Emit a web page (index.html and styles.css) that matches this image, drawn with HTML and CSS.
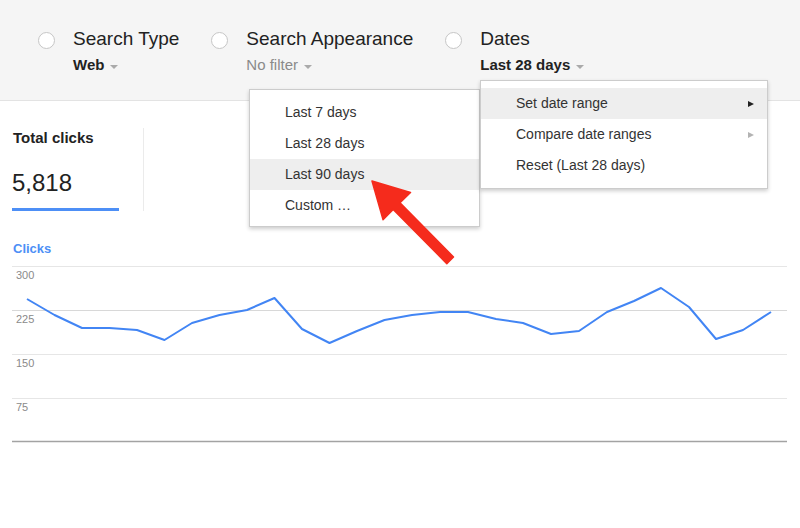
FILE: index.html
```html
<!DOCTYPE html>
<html lang="en">
<head>
<meta charset="utf-8">
<title>Search Analytics</title>
<link rel="stylesheet" href="styles.css">
</head>
<body>
<div class="page">
  <header class="filters">
    <div class="filter">
      <span class="radio"></span>
      <div class="filter-body">
        <div class="filter-title">Search Type</div>
        <div class="filter-value strong">Web<span class="caret"></span></div>
      </div>
    </div>
    <div class="filter">
      <span class="radio"></span>
      <div class="filter-body">
        <div class="filter-title">Search Appearance</div>
        <div class="filter-value muted">No filter<span class="caret"></span></div>
      </div>
    </div>
    <div class="filter">
      <span class="radio"></span>
      <div class="filter-body">
        <div class="filter-title">Dates</div>
        <div class="filter-value strong">Last 28 days<span class="caret"></span></div>
      </div>
    </div>
  </header>

  <section class="metrics">
    <div class="metric">
      <div class="metric-label">Total clicks</div>
      <div class="metric-value">5,818</div>
      <div class="metric-bar"></div>
    </div>
    <div class="metric-divider"></div>
  </section>

  <div class="series-label">Clicks</div>

  <svg class="chart" width="776" height="186" viewBox="12 262 776 186">
    <g class="grid">
      <line x1="12" y1="267.5" x2="787" y2="267.5"/>
      <line x1="12" y1="311.5" x2="787" y2="311.5" class="mid"/>
      <line x1="12" y1="355.5" x2="787" y2="355.5"/>
      <line x1="12" y1="399.5" x2="787" y2="399.5"/>
    </g>
    <line class="axis" x1="12" y1="442.5" x2="787" y2="442.5"/>
    <g class="ylabels">
      <text x="16" y="280">300</text>
      <text x="16" y="324">225</text>
      <text x="16" y="368">150</text>
      <text x="16" y="412">75</text>
    </g>
    <polyline class="series" points="27,300 54.5,316 82,329 109.5,329 137,331 164.5,341 192,324 219.5,316 247,311 274.5,299 302,330 329.5,344 357,332 384.5,321 412,316 440,313 468,313 496,320 523,324 551,335 579,332 607,313 634,302 661,289 689,308 716,340 743,331 771,313"/>
  </svg>

  <div class="menu menu-presets">
    <div class="menu-item">Last 7 days</div>
    <div class="menu-item">Last 28 days</div>
    <div class="menu-item active">Last 90 days</div>
    <div class="menu-item">Custom …</div>
  </div>

  <div class="menu menu-dates">
    <div class="menu-item active">Set date range<span class="sub-arrow"></span></div>
    <div class="menu-item">Compare date ranges<span class="sub-arrow disabled"></span></div>
    <div class="menu-item">Reset (Last 28 days)</div>
  </div>

  <svg class="callout" width="800" height="528" viewBox="0 0 800 528">
    <polygon points="372,181 410.5,192.5 400,202.8 453.5,257 446.8,263.6 393.2,209.4 383,219.6" stroke-linejoin="round"/>
  </svg>
</div>
</body>
</html>
```

FILE: styles.css
```css
* { box-sizing: border-box; }

html, body {
  margin: 0;
  padding: 0;
  background: #fff;
}

body {
  font-family: "Liberation Sans", Arial, sans-serif;
  color: #222;
}

.page {
  position: relative;
  width: 800px;
  height: 528px;
  overflow: hidden;
}

/* Filter header */
.filters {
  display: flex;
  gap: 32px;
  height: 101px;
  padding: 27px 0 0 38px;
  background: #f5f5f5;
  border-bottom: 1px solid #e3e3e3;
}

.filter {
  display: flex;
  align-items: flex-start;
}

.radio {
  width: 17px;
  height: 17px;
  margin-top: 5px;
  margin-right: 18px;
  border: 1px solid #c6c6c6;
  border-radius: 50%;
  background: #fff;
  flex: none;
}

.filter-title {
  font-size: 19px;
  line-height: 24px;
  color: #222;
  margin-bottom: 5px;
}

.filter-value {
  font-size: 15px;
  line-height: 18px;
  display: flex;
  align-items: center;
}

.filter-value.strong {
  font-weight: bold;
  color: #222;
}

.filter-value.muted {
  color: #8a8a8a;
}

.caret {
  display: inline-block;
  width: 0;
  height: 0;
  margin-left: 6px;
  margin-top: 3px;
  border-left: 4px solid transparent;
  border-right: 4px solid transparent;
  border-top: 4px solid #aaa;
}

/* Metrics */
.metrics {
  display: flex;
  margin-top: 27px;
  padding-left: 12px;
}

.metric {
  width: 107px;
  display: flex;
  flex-direction: column;
}

.metric-label {
  font-size: 15px;
  font-weight: bold;
  line-height: 18px;
  color: #222;
  margin-top: 1px;
  margin-left: 1px;
}

.metric-value {
  font-size: 24px;
  line-height: 30px;
  margin-top: 21px;
  color: #222;
}

.metric-bar {
  height: 3px;
  margin-top: 10px;
  background: #4d8ff6;
}

.metric-divider {
  width: 1px;
  margin-left: 24px;
  background: #ebebeb;
}

.series-label {
  margin: 30px 0 0 13px;
  font-size: 13px;
  font-weight: bold;
  line-height: 16px;
  color: #4d8ff6;
}

/* Chart */
.chart {
  display: block;
  margin: 4px 0 0 12px;
}

.grid line {
  stroke: #e6e6e6;
  stroke-width: 1;
}

.grid line.mid {
  stroke: #d8d8d8;
}

.axis {
  stroke: #a3a3a3;
  stroke-width: 1.5;
}

.ylabels text {
  font-family: "Liberation Sans", Arial, sans-serif;
  font-size: 11px;
  fill: #8a8a8a;
}

.series {
  fill: none;
  stroke: #4285f4;
  stroke-width: 2;
  stroke-linejoin: round;
}

/* Menus (overlays) */
.menu {
  position: absolute;
  background: #fff;
  border: 1px solid rgba(0, 0, 0, 0.2);
  box-shadow: 0 2px 4px rgba(0, 0, 0, 0.2);
  padding: 7px 0;
  font-size: 14px;
  color: #333;
}

.menu-presets {
  left: 249px;
  top: 89px;
  width: 231px;
  height: 138px;
  z-index: 1;
}

.menu-dates {
  left: 480px;
  top: 80px;
  width: 288px;
  height: 109px;
  z-index: 2;
}

.menu-item {
  height: 31px;
  line-height: 31px;
  padding: 0 13px 0 35px;
  display: flex;
  align-items: center;
  justify-content: space-between;
  white-space: nowrap;
}

.menu-item.active {
  background: #eee;
}

.sub-arrow {
  width: 0;
  height: 0;
  border-top: 3.5px solid transparent;
  border-bottom: 3.5px solid transparent;
  border-left: 6px solid #222;
}

.sub-arrow.disabled {
  border-left-color: #b3b3b3;
}

.callout {
  position: absolute;
  left: 0;
  top: 0;
  z-index: 3;
  pointer-events: none;
}

.callout polygon {
  fill: #f52b1c;
  stroke: #f52b1c;
  stroke-width: 1.5;
}
```
